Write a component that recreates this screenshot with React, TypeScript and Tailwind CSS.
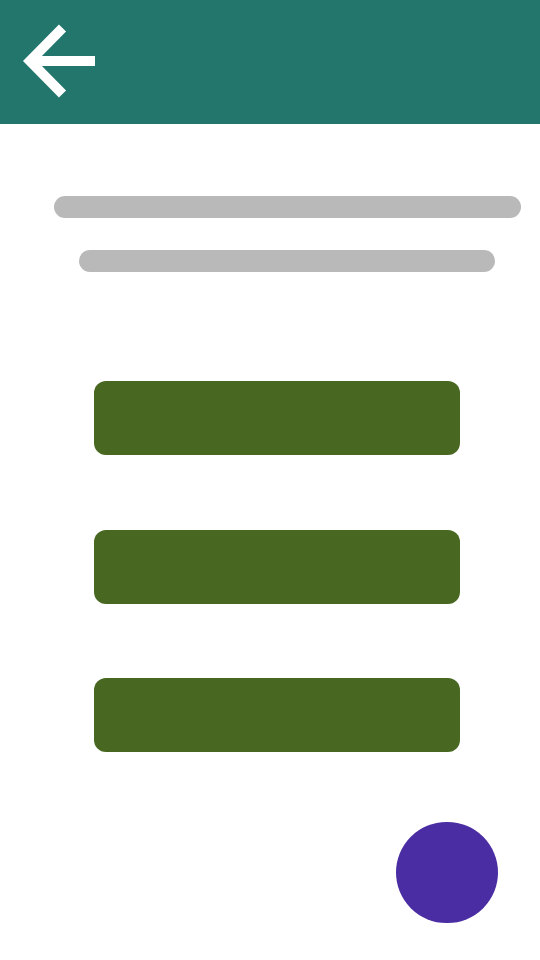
import React from 'react'

function BackArrow(): React.JSX.Element {
  return (
    <svg width="80" height="80" viewBox="0 0 80 80" fill="none" className="block">
      <path d="M11 40 L75 40" stroke="#ffffff" strokeWidth="10" />
      <path d="M42.5 7 L10 40 L42.5 73" stroke="#ffffff" strokeWidth="10" strokeLinejoin="miter" />
    </svg>
  )
}

export default function App(): React.JSX.Element {
  const buttons = [0, 1, 2]

  return (
    <div className="w-[540px] h-[960px] bg-white overflow-hidden font-['Liberation_Sans',sans-serif]">
      {/* Header */}
      <div className="h-[124px] bg-[#23766c] pl-[20px] pt-[21px]">
        <BackArrow />
      </div>

      {/* Placeholder text lines */}
      <div className="flex flex-col">
        <div className="mt-[72px] ml-[54px] w-[467px] h-[22px] rounded-full bg-[#b9b9b9]" />
        <div className="mt-[32px] ml-[79px] w-[416px] h-[22px] rounded-full bg-[#b9b9b9]" />
      </div>

      {/* Action buttons */}
      <div className="mt-[109px] ml-[94px] flex flex-col gap-[74.5px]">
        {buttons.map((i) => (
          <button
            key={i}
            type="button"
            className="w-[366px] h-[74px] rounded-[12px] bg-[#486821]"
          />
        ))}
      </div>

      {/* FAB */}
      <div className="mt-[70px] ml-[396px] w-[102px] h-[101px] rounded-full bg-[#4a2ca3]" />
    </div>
  )
}
